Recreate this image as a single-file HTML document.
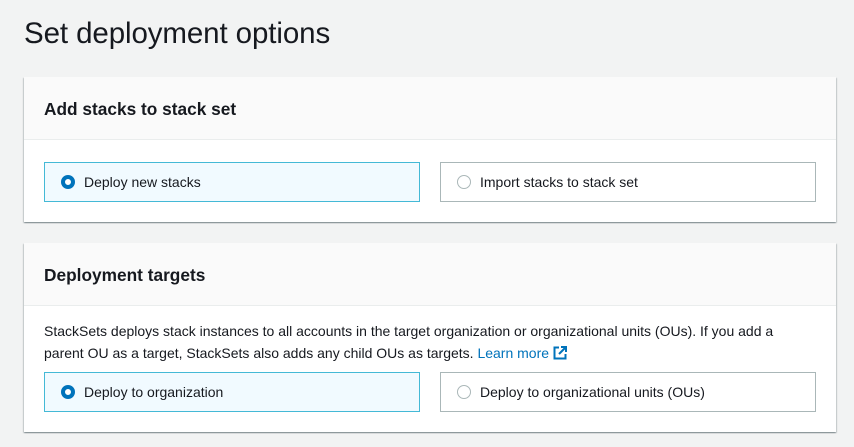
<!DOCTYPE html><html><head><style>
body{margin:0;width:854px;height:447px;background:#f2f3f3;font-family:"Liberation Sans",sans-serif;color:#16191f;position:relative;overflow:hidden}
h1{position:absolute;left:24px;top:17px;margin:0;font-size:29.5px;font-weight:400;letter-spacing:-0.1px}
.card{position:absolute;left:24px;width:812px;background:#fff;box-shadow:0 1px 1px rgba(0,28,36,.3),1px 1px 1px rgba(0,28,36,.15),-1px 1px 1px rgba(0,28,36,.15)}
.hd{height:63px;background:#fafafa;border-bottom:1px solid #eaeded;box-sizing:border-box;padding:22px 20px;font-size:17.3px;font-weight:700}
.tile{position:absolute;width:376px;height:40px;box-sizing:border-box;border:1px solid #aab7b8;font-size:14px;display:flex;align-items:center;padding-left:16px}
.tile.sel{border-color:#44b9d6;background:#f1faff}
.r{width:14px;height:14px;border-radius:50%;box-sizing:border-box;border:1px solid #aab7b8;margin-right:9px;background:#fff}
.sel .r{border:4px solid #0073bb}
p{position:absolute;left:20px;top:77px;margin:0;font-size:14px;line-height:22px;width:770px}
a{color:#0073bb;text-decoration:none}
</style></head><body>
<h1>Set deployment options</h1>
<div class="card" style="top:77px;height:145px">
<div class="hd">Add stacks to stack set</div>
<div class="tile sel" style="left:20px;top:85px"><div class="r"></div>Deploy new stacks</div>
<div class="tile" style="left:416px;top:85px"><div class="r"></div>Import stacks to stack set</div>
</div>
<div class="card" style="top:243px;height:189px">
<div class="hd">Deployment targets</div>
<p>StackSets deploys stack instances to all accounts in the target organization or organizational units (OUs). If you add a parent OU as a target, StackSets also adds any child OUs as targets. <a>Learn more <svg width="14" height="14" viewBox="0 0 14 14" style="vertical-align:-2px"><path d="M6 1.5H1.5v11h11V8" fill="none" stroke="#0073bb" stroke-width="2"/><path d="M8 1h5v5M13 1L6 8" fill="none" stroke="#0073bb" stroke-width="2"/></svg></a></p>
<div class="tile sel" style="left:20px;top:129px"><div class="r"></div>Deploy to organization</div>
<div class="tile" style="left:416px;top:129px"><div class="r"></div>Deploy to organizational units (OUs)</div>
</div>
</body></html>
